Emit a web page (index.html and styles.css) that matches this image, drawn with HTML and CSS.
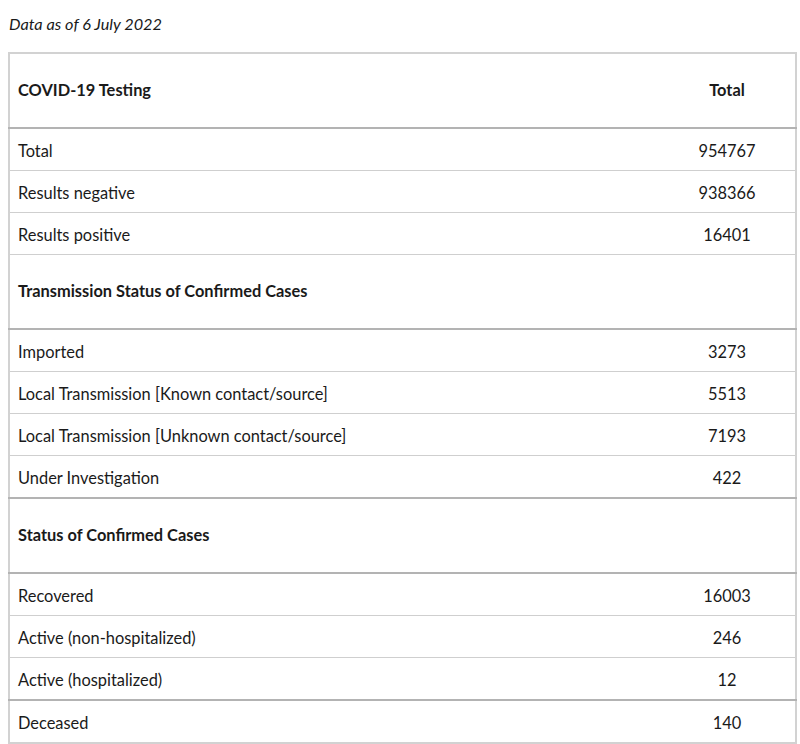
FILE: index.html
```html
<!DOCTYPE html>
<html>
<head>
<meta charset="utf-8">
<link rel="stylesheet" href="styles.css">
</head>
<body>
<p class="asof">Data as of 6 July 2022</p>
<table class="data">
  <thead>
    <tr class="head"><th class="label">COVID-19 Testing</th><th class="num">Total</th></tr>
  </thead>
  <tbody>
    <tr><td>Total</td><td class="num">954767</td></tr>
    <tr><td>Results negative</td><td class="num">938366</td></tr>
    <tr><td>Results positive</td><td class="num">16401</td></tr>
    <tr class="head sec"><th class="label">Transmission Status of Confirmed Cases</th><th></th></tr>
    <tr><td>Imported</td><td class="num">3273</td></tr>
    <tr><td>Local Transmission [Known contact/source]</td><td class="num">5513</td></tr>
    <tr><td>Local Transmission [Unknown contact/source]</td><td class="num">7193</td></tr>
    <tr class="endgroup"><td>Under Investigation</td><td class="num">422</td></tr>
    <tr class="head"><th class="label">Status of Confirmed Cases</th><th></th></tr>
    <tr><td>Recovered</td><td class="num">16003</td></tr>
    <tr><td>Active (non-hospitalized)</td><td class="num">246</td></tr>
    <tr class="endgroup"><td>Active (hospitalized)</td><td class="num">12</td></tr>
    <tr><td>Deceased</td><td class="num">140</td></tr>
  </tbody>
</table>
</body>
</html>
```
FILE: styles.css
```css
html, body {
  margin: 0;
  padding: 0;
  background: #fff;
}
body {
  padding: 12px 0 0 8px;
  font-family: Lato, "Open Sans", sans-serif;
  color: #1a1a1a;
  font-size: 16.4px;
}
.asof {
  margin: 0 0 16px 1px;
  font-style: italic;
  line-height: 24px;
  font-size: 16.3px;
}
.data {
  border-collapse: collapse;
  width: 789px;
  border: 2px solid #d2d2d2;
}
.data td, .data th {
  border-top: 1px solid #cfcfcf;
  border-bottom: 1px solid #cfcfcf;
  padding: 9px 8px 7px 8px;
  line-height: 25px;
  text-align: left;
  font-weight: 400;
}
.data th {
  font-weight: 700;
  padding-top: 23px;
  padding-bottom: 25px;
  border-bottom: 2px solid #b3b3b3;
}
.data .num {
  width: 120px;
  text-align: center;
}
.data tr.endgroup td {
  border-bottom: 2px solid #b3b3b3;
}
```
